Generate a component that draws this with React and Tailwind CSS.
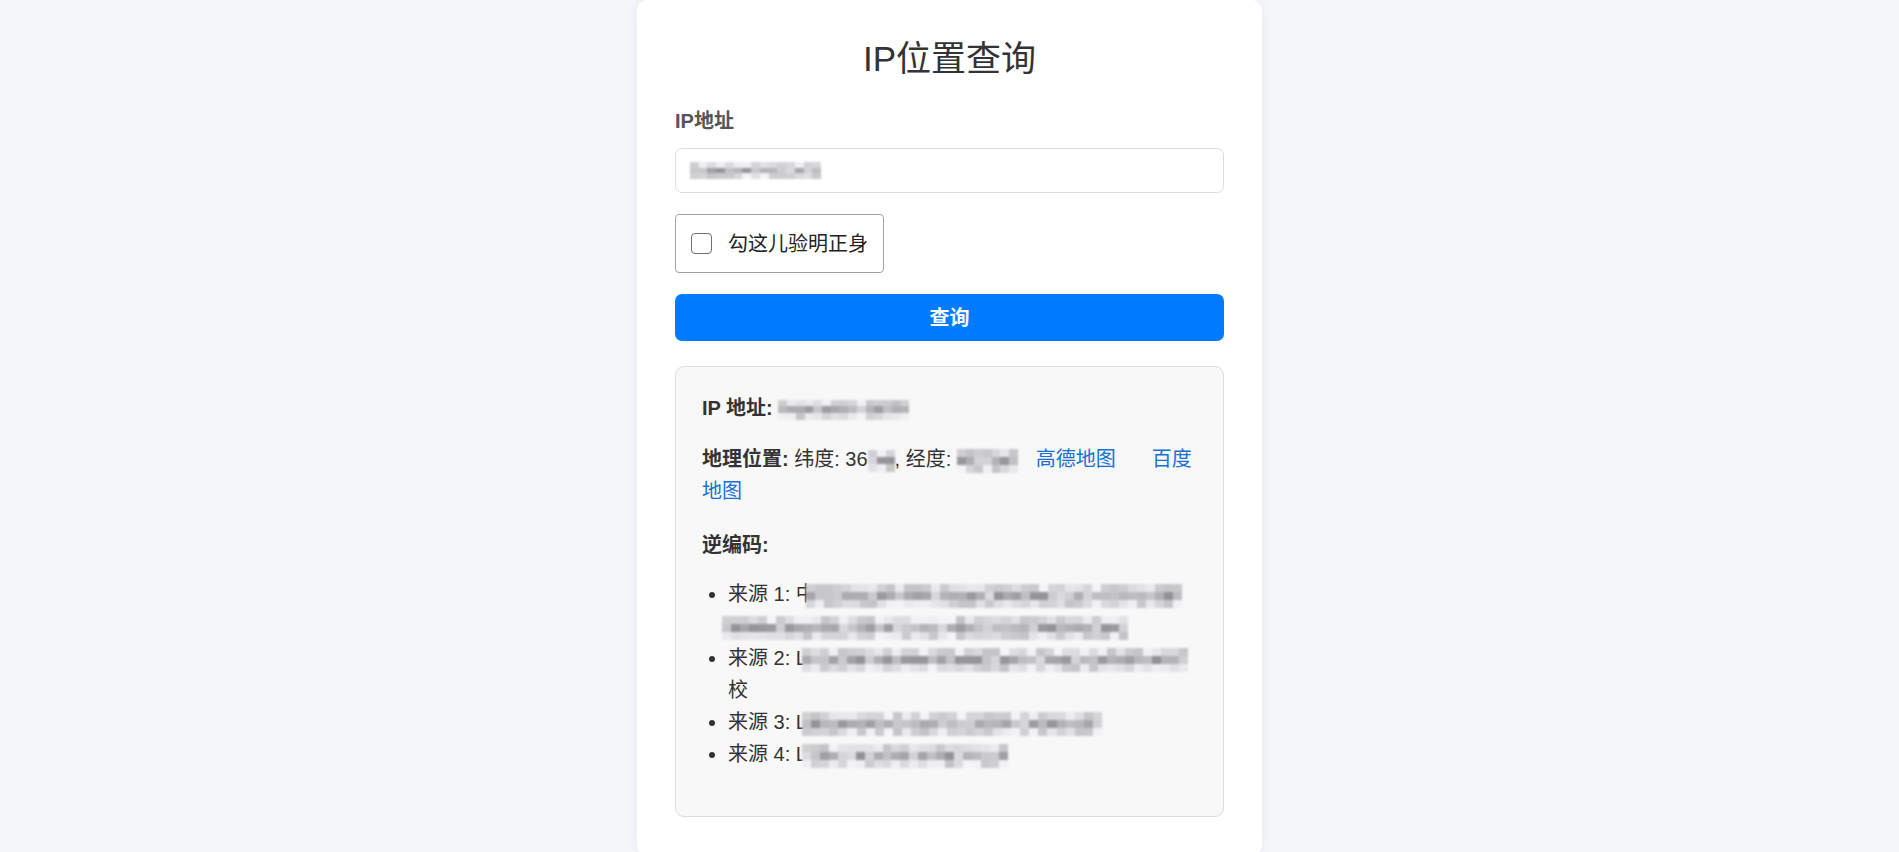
import React from "react";

// Deterministic grey pixel blocks used to mask private values.
function seeded(seed) {
  let s = seed >>> 0;
  return () => {
    s = (s * 1664525 + 1013904223) >>> 0;
    return s / 4294967296;
  };
}

function Mosaic({ width, seed = 1, height = 22, className = "" }) {
  const rnd = seeded(seed);
  const cols = Math.max(1, Math.round(width / 9));
  const rows = 3;
  const columns = [];
  for (let c = 0; c < cols; c++) {
    const cells = [];
    for (let r = 0; r < rows; r++) {
      const mid = r === 1;
      const base = mid ? 145 + rnd() * 75 : 195 + rnd() * 50;
      const v = Math.round(base);
      cells.push(
        <div
          key={r}
          className="flex-1"
          style={{ backgroundColor: `rgb(${v},${v},${Math.min(255, v + 3)})` }}
        />
      );
    }
    columns.push(
      <div key={c} className="flex flex-1 flex-col">
        {cells}
      </div>
    );
  }
  return (
    <span
      className={`inline-flex align-middle blur-[0.8px] ${className}`}
      style={{ width, height }}
    >
      {columns}
    </span>
  );
}

const sources = [
  { n: 1, lead: "中", overlap: "-ml-[10px]", parts: [376, 406], seed: 11 },
  { n: 2, lead: "L", overlap: "-ml-[5px]", parts: [386], tail: "校", seed: 23 },
  { n: 3, lead: "L", overlap: "-ml-[5px]", parts: [300], seed: 37 },
  { n: 4, lead: "L", overlap: "-ml-[5px]", parts: [206], seed: 41 },
];

export default function App() {
  return (
    <div
      className="min-h-[852px] bg-[#f4f6fa] text-[#333]"
      style={{ fontFamily: '"Liberation Sans", Arial, "Noto Sans CJK SC", sans-serif' }}
    >
      <div className="mx-auto w-[625px] rounded-[10px] bg-white px-[38px] pt-[37px] pb-[38px] shadow-[0_0_12px_rgba(0,0,0,0.06)]">
        <h1 className="mb-[28px] text-center text-[35px] leading-[44px] font-normal text-[#333]">
          IP位置查询
        </h1>

        <label className="mb-[15px] block text-[20px] leading-[24px] font-bold text-[#555]">
          IP地址
        </label>
        <div className="flex h-[45px] items-center rounded-[7px] border border-[#ddd] bg-white px-[14px]">
          <Mosaic width={131} seed={5} height={17} />
        </div>

        <div className="mt-[21px] inline-flex h-[59px] items-center rounded-[4px] border border-[#a3a3a3] bg-white pr-[15px] pl-[15px]">
          <span className="h-[21px] w-[21px] rounded-[4px] border-[1.5px] border-[#6f6f6f] bg-white" />
          <span className="ml-[16px] text-[20px] leading-[24px] text-[#222]">勾这儿验明正身</span>
        </div>

        <button className="mt-[21px] flex h-[47px] w-full items-center justify-center rounded-[7px] bg-[#007bff] text-[20px] font-bold text-white">
          查询
        </button>

        <div className="mt-[25px] rounded-[9px] border border-[#ddd] bg-[#f8f8f8] pt-[25px] pr-[26px] pb-[46px] pl-[26px] text-[20px] leading-[32px]">
          <p className="mb-[19px]">
            <b>IP 地址:</b> <Mosaic width={131} seed={3} height={20} />
          </p>
          <p className="mb-[22px]">
            <b>地理位置:</b> 纬度: 36<Mosaic width={27} seed={7} height={22} />, 经度:{" "}
            <Mosaic width={61} seed={9} height={24} />
            <a className="ml-[18px] text-[#1470d6]">高德地图</a>
            <a className="ml-[36px] text-[#1470d6]">百度地图</a>
          </p>
          <p className="mb-[17px]">
            <b>逆编码:</b>
          </p>
          <ul className="list-disc pl-[26px]">
            {sources.map((s) => (
              <li key={s.n}>
                来源 {s.n}: {s.lead}
                {s.parts.map((w, i) => (
                  <Mosaic
                    key={i}
                    width={w}
                    seed={s.seed + i * 5}
                    height={24}
                    className={i === 0 ? s.overlap : "-ml-[6px]"}
                  />
                ))}
                {s.tail ? <span>{s.tail}</span> : null}
              </li>
            ))}
          </ul>
        </div>
      </div>
    </div>
  );
}
